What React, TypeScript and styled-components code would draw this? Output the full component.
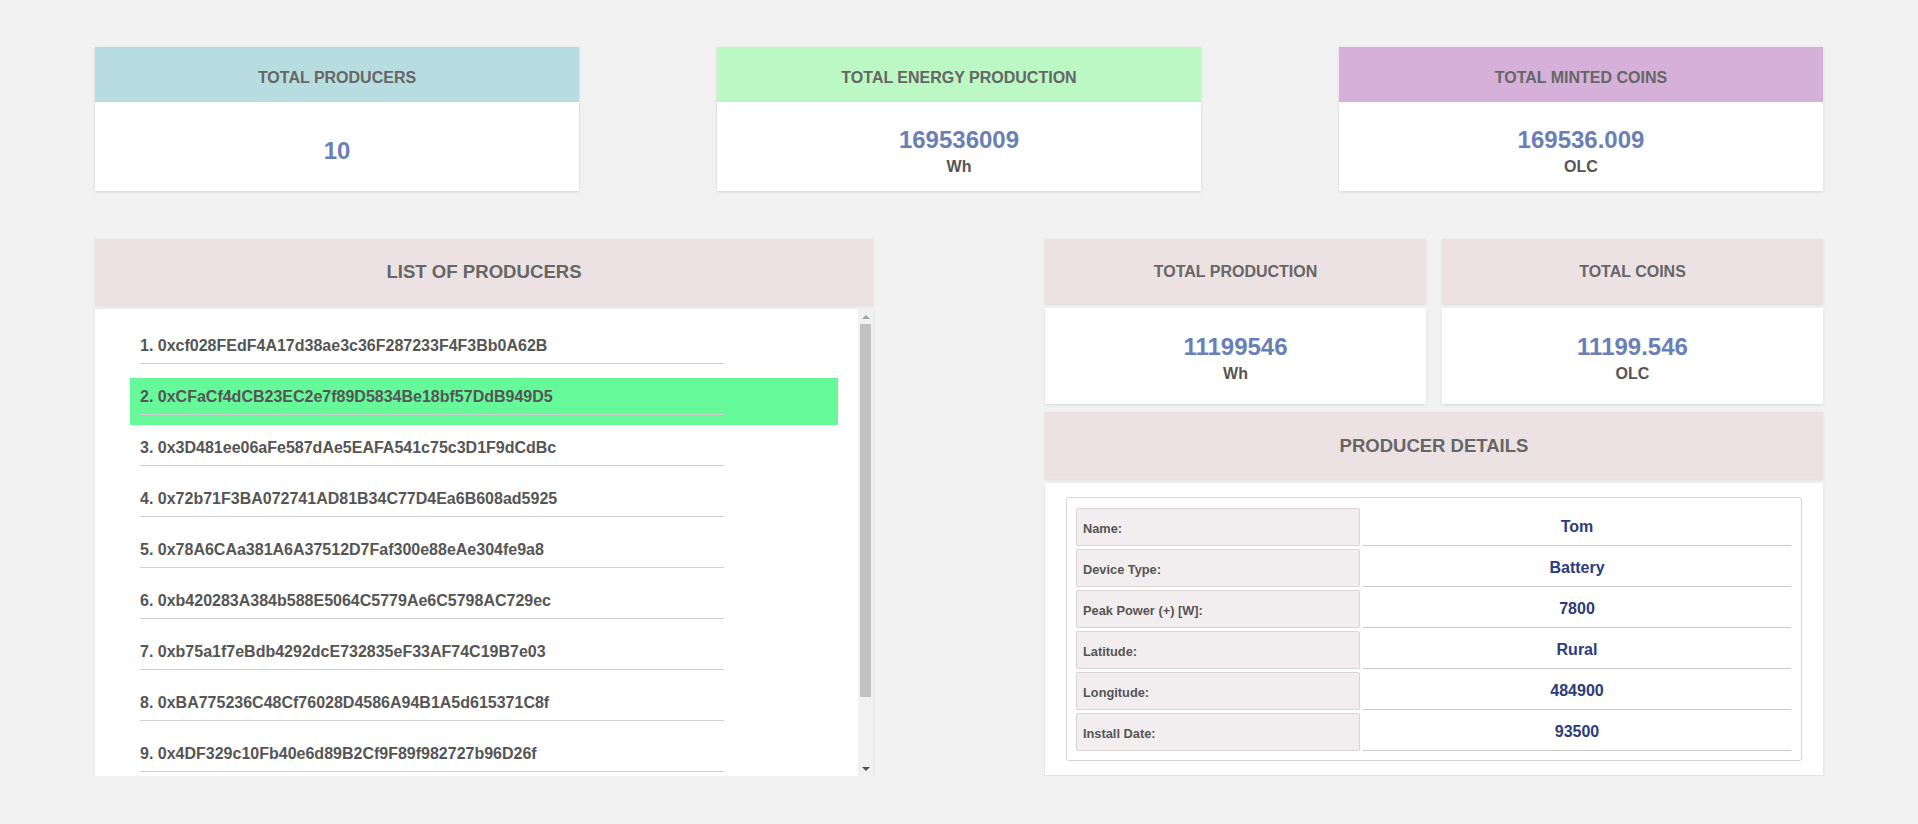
import React from "react";
import styled, { createGlobalStyle } from "styled-components";

const GlobalStyle = createGlobalStyle`
  html, body {
    margin: 0;
    padding: 0;
    background: #f2f2f2;
    font-family: "Liberation Sans", Arial, Helvetica, sans-serif;
  }
  * { box-sizing: border-box; }
`;

const Page = styled.div`
  padding: 47px 95px 0 95px;
  width: 1918px;
`;

const TopRow = styled.div`
  display: grid;
  grid-template-columns: repeat(3, 484px);
  column-gap: 138px;
`;

const TopCard = styled.section`
  display: flex;
  flex-direction: column;
  height: 144px;
  background: #fff;
  box-shadow: 0 1px 3px rgba(0, 0, 0, 0.12);
`;

const TopHeader = styled.header<{ $bg: string }>`
  height: 55px;
  flex: none;
  background: ${(p) => p.$bg};
  display: flex;
  align-items: center;
  justify-content: center;
  font-size: 16px;
  font-weight: 700;
  color: #666;
  padding-top: 6px;
`;

const ValueBody = styled.div<{ $pad: number }>`
  flex: 1;
  display: flex;
  flex-direction: column;
  align-items: center;
  padding-top: ${(p) => p.$pad}px;
  background: #fff;
`;

const BigNumber = styled.div`
  font-size: 24px;
  line-height: 28px;
  font-weight: 700;
  color: #6a7fb6;
`;

const Unit = styled.div`
  font-size: 16px;
  line-height: 26px;
  font-weight: 700;
  color: #555;
`;

const Lower = styled.div`
  display: grid;
  grid-template-columns: 778px 778px;
  column-gap: 172px;
  margin-top: 48px;
  align-items: start;
`;

const Column = styled.div`
  display: flex;
  flex-direction: column;
`;

const PanelHeader = styled.header<{ $h: number; $size: number }>`
  height: ${(p) => p.$h}px;
  background: #ede2e3;
  box-shadow: 0 1px 3px rgba(0, 0, 0, 0.1);
  display: flex;
  align-items: center;
  justify-content: center;
  font-size: ${(p) => p.$size}px;
  font-weight: 700;
  color: #666;
  margin-bottom: 4px;
`;

const ListBody = styled.div`
  display: flex;
  height: 467px;
  background: #fff;
  box-shadow: 0 1px 3px rgba(0, 0, 0, 0.1);
`;

const ListContent = styled.ol`
  flex: 1;
  list-style: none;
  margin: 0;
  overflow: hidden;
  padding: 18px 20px 18px 35px;
`;

const Scrollbar = styled.div`
  width: 15px;
  flex: none;
  background: #f1f1f1;
  display: flex;
  flex-direction: column;
`;

const ScrollButton = styled.div`
  height: 15px;
  flex: none;
  display: flex;
  align-items: center;
  justify-content: center;
`;

const Arrow = styled.span<{ $down?: boolean }>`
  width: 0;
  height: 0;
  border-left: 4px solid transparent;
  border-right: 4px solid transparent;
  ${(p) =>
    p.$down
      ? "border-top: 4px solid #505050;"
      : "border-bottom: 4px solid #a3a3a3;"}
`;

const Track = styled.div`
  flex: 1;
  padding: 0 2px;
`;

const Thumb = styled.div`
  height: 373px;
  background: #c1c1c1;
`;

const Item = styled.li<{ $active?: boolean }>`
  height: 47px;
  margin-bottom: 4px;
  padding-left: 10px;
  background: ${(p) => (p.$active ? "#66f99a" : "transparent")};
`;

const ItemInner = styled.div`
  width: 584px;
  height: 37px;
  padding-top: 10px;
  line-height: 18px;
  border-bottom: 1px solid #cfcfcf;
  font-size: 16px;
  font-weight: 700;
  color: #555;
  white-space: nowrap;
`;

const StatRow = styled.div`
  display: grid;
  grid-template-columns: 1fr 1fr;
  column-gap: 16px;
  margin-bottom: 8px;
`;

const StatBody = styled.div`
  height: 96px;
  background: #fff;
  box-shadow: 0 1px 3px rgba(0, 0, 0, 0.1);
  display: flex;
  flex-direction: column;
  align-items: center;
  padding-top: 25px;
`;

const DetailsBody = styled.div`
  height: 292px;
  background: #fff;
  box-shadow: 0 1px 3px rgba(0, 0, 0, 0.1);
  padding: 14px 21px;
`;

const DetailsBox = styled.div`
  border: 1px solid #d4d4d4;
  border-radius: 3px;
  padding: 7px 7px 6px 6px;
  height: 264px;
`;

const Table = styled.table`
  width: 100%;
  border-collapse: separate;
  border-spacing: 3px;
`;

const LabelCell = styled.th`
  width: 284px;
  height: 38px;
  background: #f2eef0;
  border: 1px solid #dcd3d5;
  border-radius: 2px;
  text-align: left;
  padding: 2px 0 0 6px;
  font-size: 12.8px;
  font-weight: 700;
  color: #555;
`;

const ValueCell = styled.td`
  height: 38px;
  border-bottom: 1px solid #c9c9c9;
  text-align: center;
  padding: 0;
  font-size: 16px;
  font-weight: 700;
  color: #2c3b7b;
`;

const producers = [
  "0xcf028FEdF4A17d38ae3c36F287233F4F3Bb0A62B",
  "0xCFaCf4dCB23EC2e7f89D5834Be18bf57DdB949D5",
  "0x3D481ee06aFe587dAe5EAFA541c75c3D1F9dCdBc",
  "0x72b71F3BA072741AD81B34C77D4Ea6B608ad5925",
  "0x78A6CAa381A6A37512D7Faf300e88eAe304fe9a8",
  "0xb420283A384b588E5064C5779Ae6C5798AC729ec",
  "0xb75a1f7eBdb4292dcE732835eF33AF74C19B7e03",
  "0xBA775236C48Cf76028D4586A94B1A5d615371C8f",
  "0x4DF329c10Fb40e6d89B2Cf9F89f982727b96D26f",
  "0x19E7E376E7C213B7E7e7e46cc70A5dD086DAff2A",
];

const details: [string, string][] = [
  ["Name:", "Tom"],
  ["Device Type:", "Battery"],
  ["Peak Power (+) [W]:", "7800"],
  ["Latitude:", "Rural"],
  ["Longitude:", "484900"],
  ["Install Date:", "93500"],
];

export default function App() {
  return (
    <>
      <GlobalStyle />
      <Page>
        <TopRow>
          <TopCard>
            <TopHeader $bg="#b8dde1">TOTAL PRODUCERS</TopHeader>
            <ValueBody $pad={35}>
              <BigNumber>10</BigNumber>
            </ValueBody>
          </TopCard>
          <TopCard>
            <TopHeader $bg="#bbf8c4">TOTAL ENERGY PRODUCTION</TopHeader>
            <ValueBody $pad={24}>
              <BigNumber>169536009</BigNumber>
              <Unit>Wh</Unit>
            </ValueBody>
          </TopCard>
          <TopCard>
            <TopHeader $bg="#d5b1d9">TOTAL MINTED COINS</TopHeader>
            <ValueBody $pad={24}>
              <BigNumber>169536.009</BigNumber>
              <Unit>OLC</Unit>
            </ValueBody>
          </TopCard>
        </TopRow>

        <Lower>
          <Column>
            <PanelHeader $h={66} $size={18.6}>LIST OF PRODUCERS</PanelHeader>
            <ListBody>
              <ListContent>
                {producers.map((p, i) => (
                  <Item key={p} $active={i === 1}>
                    <ItemInner>
                      {i + 1}. {p}
                    </ItemInner>
                  </Item>
                ))}
              </ListContent>
              <Scrollbar aria-hidden="true">
                <ScrollButton>
                  <Arrow />
                </ScrollButton>
                <Track>
                  <Thumb />
                </Track>
                <ScrollButton>
                  <Arrow $down />
                </ScrollButton>
              </Scrollbar>
            </ListBody>
          </Column>

          <Column>
            <StatRow>
              <Column>
                <PanelHeader $h={65} $size={16}>TOTAL PRODUCTION</PanelHeader>
                <StatBody>
                  <BigNumber>11199546</BigNumber>
                  <Unit>Wh</Unit>
                </StatBody>
              </Column>
              <Column>
                <PanelHeader $h={65} $size={16}>TOTAL COINS</PanelHeader>
                <StatBody>
                  <BigNumber>11199.546</BigNumber>
                  <Unit>OLC</Unit>
                </StatBody>
              </Column>
            </StatRow>
            <PanelHeader $h={67} $size={18.5}>PRODUCER DETAILS</PanelHeader>
            <DetailsBody>
              <DetailsBox>
                <Table>
                  <tbody>
                    {details.map(([k, v]) => (
                      <tr key={k}>
                        <LabelCell>{k}</LabelCell>
                        <ValueCell>{v}</ValueCell>
                      </tr>
                    ))}
                  </tbody>
                </Table>
              </DetailsBox>
            </DetailsBody>
          </Column>
        </Lower>
      </Page>
    </>
  );
}
